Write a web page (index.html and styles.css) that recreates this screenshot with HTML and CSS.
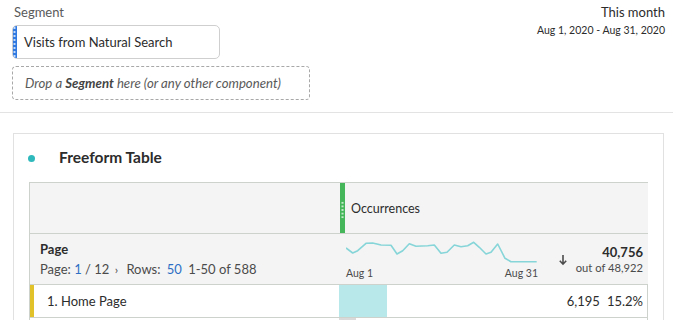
FILE: index.html
```html
<!DOCTYPE html>
<html>
<head>
<meta charset="utf-8">
<link rel="stylesheet" href="styles.css">
</head>
<body>
<div class="top">
  <div class="seg-col">
    <div class="label">Segment</div>
    <div class="pill"><span class="grip"></span><span class="pill-text">Visits from Natural Search</span></div>
    <div class="drop"><span>Drop a <b>Segment</b> here (or any other component)</span></div>
  </div>
  <div class="range">
    <div class="range-name">This month</div>
    <div class="range-dates">Aug 1, 2020 - Aug 31, 2020</div>
  </div>
</div>
<div class="panel">
  <div class="panel-head">
    <span class="dot"></span>
    <span class="panel-title">Freeform Table</span>
  </div>
  <div class="table">
    <div class="cell head-left"></div>
    <div class="cell head-metric"><span class="metric-grip"><span class="grip-dots"></span></span><span>Occurrences</span></div>

    <div class="cell dim-cell">
      <div class="dim-name">Page</div>
      <div class="pager">Page: <span class="blue">1</span> <span class="sep">/ 12</span> <span class="chev">›</span> Rows: <span class="blue rows">50</span> 1-50 of 588</div>
    </div>
    <div class="cell total-cell">
      <div class="spark">
        <svg width="192" height="24" viewBox="0 0 192 24">
          <polyline fill="none" stroke="#86d5d8" stroke-width="1.6" stroke-linejoin="round" points="0,7 6.7,12 11.7,9.7 20,2.3 26.7,2 35,4 45,4.3 51,13 56.7,9.7 63.3,2.7 70,5.3 81.7,4.7 88.3,4 95,12.3 101,11.3 108.3,4 115,5.7 121.7,4.7 127.7,1.3 133.3,6.3 140,13 145,11.3 151.7,3 159,17.3 165,20.7 190.7,20.7"/>
        </svg>
        <div class="spark-labels"><span>Aug 1</span><span>Aug 31</span></div>
      </div>
      <div class="sort">
        <svg width="10" height="12" viewBox="0 0 10 12"><path d="M5 1V10M1.8 6.8L5 10.2L8.2 6.8" fill="none" stroke="#4b4b4b" stroke-width="1.6"/></svg>
      </div>
      <div class="total">
        <div class="total-num">40,756</div>
        <div class="total-of">out of 48,922</div>
      </div>
    </div>

    <div class="cell row-left"><span class="row-mark"></span>1. Home Page</div>
    <div class="cell row-metric">
      <span class="bar" style="width:48px"></span>
      <span class="val">6,195</span><span class="pct">15.2%</span>
    </div>

    <div class="cell row-left next"></div>
    <div class="cell row-metric next"><span class="bar grey" style="width:17px"></span></div>
  </div>
</div>
</body>
</html>
```
FILE: styles.css
```css
* { box-sizing: border-box; }
html, body { margin: 0; padding: 0; background: #fff; }
body {
  font-family: Lato, "Open Sans", sans-serif;
  color: #2c2c2c;
  width: 673px;
  height: 320px;
  overflow: hidden;
}
.top {
  display: flex;
  justify-content: space-between;
  height: 113px;
  border-bottom: 1px solid #e3e3e3;
  padding: 4px 8px 0 12px;
}
.label {
  font-size: 13px;
  line-height: 16px;
  color: #5a5a5a;
  padding-left: 2px;
}
.pill {
  margin-top: 5px;
  width: 208px;
  height: 34px;
  border: 1px solid #cfcfcf;
  border-radius: 5px;
  display: flex;
  align-items: center;
  overflow: hidden;
  background: #fff;
}
.grip {
  width: 5px;
  align-self: stretch;
  margin-left: -1px;
  background-color: #2f79e0;
  background-image: radial-gradient(circle, #c4dcfb 0.9px, transparent 1.3px);
  background-size: 5px 4px;
  background-position: 0 4px;
  background-repeat: repeat-y;
}
.pill-text {
  font-size: 13px;
  margin-left: 7px;
  color: #2c2c2c;
}
.drop {
  margin-top: 7px;
  width: 298px;
  height: 34px;
  border: 1px dashed #a8a8a8;
  border-radius: 4px;
  display: flex;
  align-items: center;
  padding-left: 12px;
  font-style: italic;
  font-size: 13.2px;
  color: #5a5a5a;
}
.drop b { font-weight: 700; color: #444; }
.range {
  text-align: right;
}
.range-name {
  font-size: 13px;
  line-height: 16px;
  color: #2c2c2c;
}
.range-dates {
  margin-top: 4px;
  font-size: 10.5px;
  color: #2c2c2c;
}
.panel {
  margin: 20px 9px 0 13px;
  border: 1px solid #e1e1e1;
  border-bottom: none;
  padding: 0 15px 0 15px;
  height: 200px;
}
.panel-head {
  display: flex;
  align-items: center;
  height: 48px;
}
.dot {
  width: 7px;
  height: 7px;
  border-radius: 50%;
  background: #2fb9bd;
  margin-left: -1px;
}
.panel-title {
  margin-left: 24px;
  margin-top: -2px;
  font-size: 15.5px;
  font-weight: 700;
  color: #2c2c2c;
}
.table {
  display: grid;
  grid-template-columns: 309px 309px;
  grid-template-rows: 51px 51px 33px 10px;
  border: 1px solid #cdd2cd;
  border-bottom: none;
}
.cell { min-width: 0; }
.head-left, .head-metric { background: #f4f4f4; border-bottom: 1px solid #cdd2cd; }
.head-metric {
  display: flex;
  align-items: center;
  font-size: 12.5px;
  color: #2c2c2c;
}
.metric-grip {
  width: 5px;
  align-self: stretch;
  margin-left: 1px;
  margin-right: 6px;
  background-color: #45b75a;
  display: flex;
  align-items: center;
}
.grip-dots {
  display: block;
  width: 5px;
  height: 18px;
  margin-top: 4px;
  background-image: radial-gradient(circle, #c4e9cb 0.9px, transparent 1.3px);
  background-size: 5px 3.6px;
  background-repeat: repeat-y;
}
.dim-cell, .total-cell { background: #f4f4f4; border-bottom: 1px solid #cdd2cd; }
.dim-cell { padding: 7px 0 0 10px; }
.dim-name { font-size: 13px; font-weight: 700; line-height: 16px; color: #2c2c2c; }
.pager { font-size: 13px; line-height: 16px; margin-top: 4px; color: #4b4b4b; }
.blue { color: #2d6fc4; }
.rows { margin-left: 3px; margin-right: 3px; }
.chev { margin: 0 5px 0 2px; font-size: 12px; }
.total-cell {
  display: flex;
  align-items: flex-start;
  padding: 7px 5px 0 7px;
}
.spark { width: 192px; }
.spark svg { display: block; }
.spark-labels {
  display: flex;
  justify-content: space-between;
  font-size: 10.5px;
  color: #4b4b4b;
  margin-top: 2px;
}
.sort { margin-left: 20px; margin-top: 9px; }
.total { margin-left: auto; text-align: right; }
.total-num { font-size: 13px; font-weight: 700; line-height: 16px; margin-top: 3px; color: #2c2c2c; }
.total-of { font-size: 11.2px; line-height: 15px; color: #4b4b4b; }
.row-left {
  display: flex;
  align-items: center;
  font-size: 13px;
  color: #2c2c2c;
  border-bottom: 1px solid #cdd2cd;
}
.row-mark {
  width: 4px;
  align-self: stretch;
  background: #e2c22a;
  margin-right: 13px;
}
.row-metric {
  display: flex;
  align-items: center;
  border-bottom: 1px solid #cdd2cd;
  padding-right: 5px;
  font-size: 13px;
  color: #2c2c2c;
}
.bar { align-self: stretch; background: #b9e8ea; }
.bar.grey { background: #dadada; }
.val { margin-left: auto; }
.pct { margin-left: 7px; }
.next { border-bottom: none; }
```
